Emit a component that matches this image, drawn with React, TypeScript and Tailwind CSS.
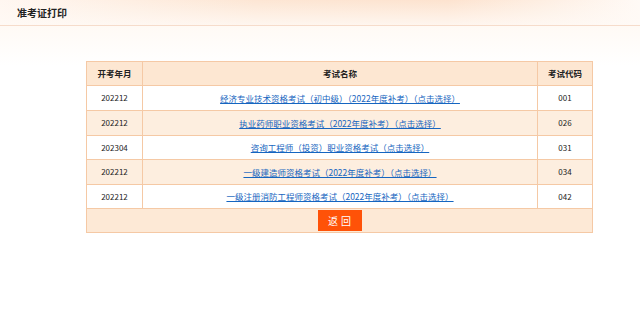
import React from 'react'

const exams = [
  { month: '202212', name: '经济专业技术资格考试（初中级）（2022年度补考）（点击选择）', code: '001', tall: true },
  { month: '202212', name: '执业药师职业资格考试（2022年度补考）（点击选择）', code: '026', tall: true },
  { month: '202304', name: '咨询工程师（投资）职业资格考试（点击选择）', code: '031', tall: false },
  { month: '202212', name: '一级建造师资格考试（2022年度补考）（点击选择）', code: '034', tall: true },
  { month: '202212', name: '一级注册消防工程师资格考试（2022年度补考）（点击选择）', code: '042', tall: false },
]

export default function App() {
  return (
    <div
      className="w-[640px] h-[325px] bg-white text-[10px] text-[#222]"
      style={{ fontFamily: '"Noto Sans CJK SC", "DejaVu Sans", sans-serif' }}
    >
      {/* Title bar */}
      <div className="h-[26px] border-b border-[#f6dccb] bg-[linear-gradient(90deg,#fff7f1_0%,#fde6d4_40%,#fde3cf_70%,#fffaf6_100%)]">
        <div className="h-full bg-[linear-gradient(180deg,rgba(255,255,255,0)_0%,rgba(255,250,246,0.8)_100%)] flex items-center pl-[17px]">
          <span className="text-[10px] font-bold text-[#222]">准考证打印</span>
        </div>
      </div>

      <div className="bg-[linear-gradient(180deg,#fffaf5_0px,#ffffff_40px)] pt-[35px] pl-[86px]">
        <table className="w-[507px] border-collapse border border-[#f5c9a5] text-center">
          <thead>
            <tr className="h-[24px] bg-[#fde7d2]">
              <th className="w-[56px] border border-[#f5c9a5] font-bold text-[8.5px]">开考年月</th>
              <th className="border border-[#f5c9a5] font-bold text-[8.5px]">考试名称</th>
              <th className="w-[55px] border border-[#f5c9a5] font-bold text-[8.5px]">考试代码</th>
            </tr>
          </thead>
          <tbody>
            {exams.map((exam, idx) => (
              <tr
                key={exam.code}
                className={`${exam.tall ? 'h-[25px]' : 'h-[24px]'} ${idx % 2 === 1 ? 'bg-[#fdeedf]' : 'bg-white'}`}
              >
                <td className="border border-[#f5c9a5] text-[8px]">{exam.month}</td>
                <td className="border border-[#f5c9a5] text-[8.5px]">
                  <a href="#" className="text-[#1565c0] underline">
                    {exam.name}
                  </a>
                </td>
                <td className="border border-[#f5c9a5] text-[8px]">{exam.code}</td>
              </tr>
            ))}
            <tr className="h-[24px] bg-[#fde9d6]">
              <td colSpan={3} className="border border-[#f5c9a5]">
                <button className="mx-auto flex h-[21px] w-[44px] items-center justify-center bg-[#ff5208] text-[10px] text-white tracking-[3px] pl-[3px]">
                  返回
                </button>
              </td>
            </tr>
          </tbody>
        </table>
      </div>
    </div>
  )
}
